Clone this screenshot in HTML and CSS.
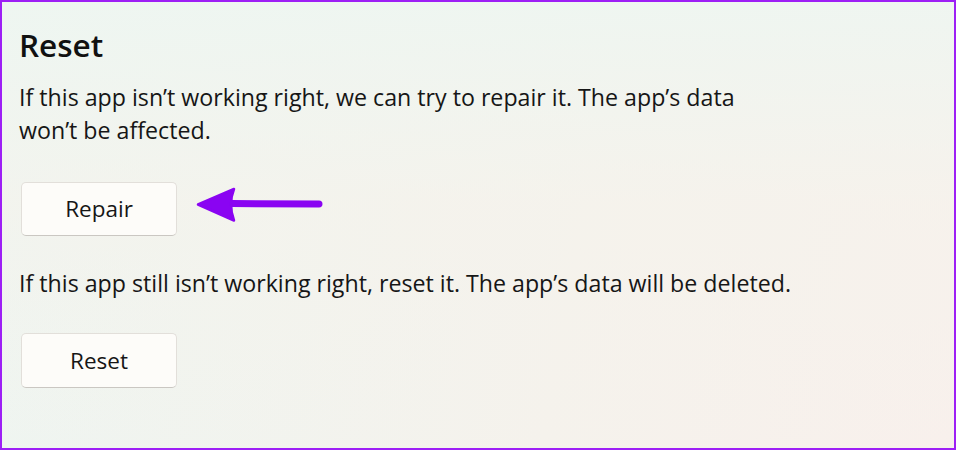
FILE: index.html
```html
<!DOCTYPE html>
<html lang="en">
<head>
<meta charset="utf-8">
<title>Reset</title>
<link rel="stylesheet" href="styles.css">
</head>
<body>
<div class="frame">
  <h1 class="title">Reset</h1>
  <p class="desc">If this app isn’t working right, we can try to repair it. The app’s data<br>won’t be affected.</p>
  <div class="btn-row">
    <button class="btn">Repair</button>
    <svg class="arrow" width="135" height="45" viewBox="0 0 135 45" aria-hidden="true">
      <path d="M40 20.5 L127 21" stroke="#8a04f2" stroke-width="7" stroke-linecap="round" fill="none"/>
      <path d="M6 21.5 L42 6 Q36 21 42 37.5 Z" fill="#8a04f2" stroke="#8a04f2" stroke-width="2.5" stroke-linejoin="round"/>
    </svg>
  </div>
  <p class="desc second">If this app still isn’t working right, reset it. The app’s data will be deleted.</p>
  <button class="btn btn-reset">Reset</button>
</div>
</body>
</html>
```

FILE: styles.css
```css
html, body {
  margin: 0;
  padding: 0;
}

body {
  width: 956px;
  height: 450px;
  overflow: hidden;
  font-family: "Open Sans", "Noto Sans", sans-serif;
  color: #1a1a1a;
}

.frame {
  box-sizing: border-box;
  width: 956px;
  height: 450px;
  border: 2px solid #9d1ff5;
  padding: 23px 0 0 17px;
  background:
    linear-gradient(180deg, rgba(238,246,241,0.9) 0%, rgba(245,243,236,0.6) 45%, rgba(248,240,238,0) 100%),
    linear-gradient(100deg, #eef5f1 0%, #f5f2ec 60%, #f8f0ec 100%);
  background-color: #f7f1ee;
}

.title {
  margin: 0;
  font-size: 31.5px;
  line-height: 40px;
  font-weight: 600;
  color: #111;
}

.desc {
  margin: 15.5px 0 0 0;
  font-size: 23.2px;
  line-height: 33px;
  color: #161616;
}

.second {
  margin-top: 31px;
}

.btn-row {
  display: flex;
  align-items: center;
  margin-top: 35px;
  position: relative;
}

.btn {
  box-sizing: border-box;
  width: 156px;
  height: 54px;
  margin-left: 2px;
  display: flex;
  align-items: center;
  justify-content: center;
  font-family: inherit;
  font-size: 22.5px;
  color: #161616;
  background: #fdfcf9;
  border: 1px solid #e2dfda;
  border-bottom-color: #cac7c2;
  border-radius: 5px;
  padding: 0;
}

.btn-reset {
  margin-top: 33px;
  height: 55px;
}

.arrow {
  position: absolute;
  left: 173px;
  top: 1px;
}
```
